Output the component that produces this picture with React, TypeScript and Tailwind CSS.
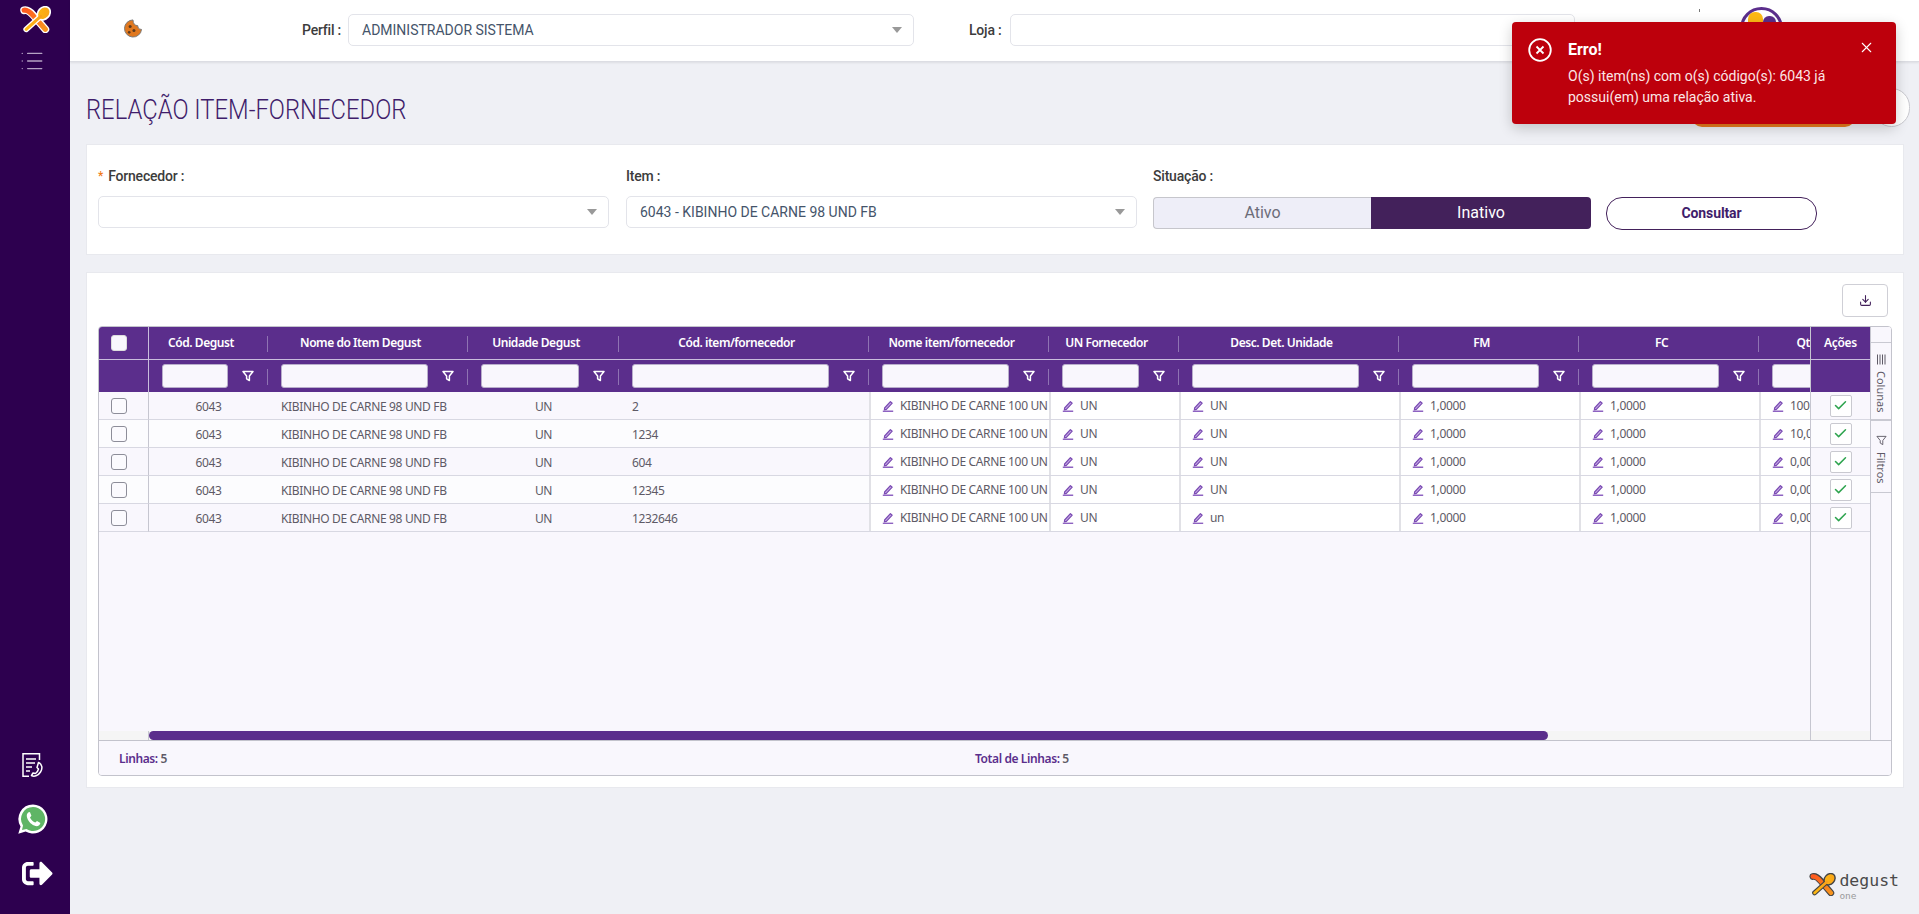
import React from "react";
import { Check, Download, List, X } from "lucide-react";
import { FaSignOutAlt } from "react-icons/fa";

const roboto = "font-['Roboto',sans-serif]";
const cellFont = "font-['Noto_Sans',sans-serif]";

type Col = { title: string; w: number; kind: "center" | "left" | "edit"; values: string[] };
const n = (v: string) => [v, v, v, v, v];
const columns: Col[] = [
  { title: "Cód. Degust", w: 119, kind: "center", values: n("6043") },
  { title: "Nome do Item Degust", w: 200, kind: "left", values: n("KIBINHO DE CARNE 98 UND FB") },
  { title: "Unidade Degust", w: 151, kind: "center", values: n("UN") },
  { title: "Cód. item/fornecedor", w: 250, kind: "left", values: ["2", "1234", "604", "12345", "1232646"] },
  { title: "Nome item/fornecedor", w: 180, kind: "edit", values: n("KIBINHO DE CARNE 100 UN") },
  { title: "UN Fornecedor", w: 130, kind: "edit", values: n("UN") },
  { title: "Desc. Det. Unidade", w: 220, kind: "edit", values: ["UN", "UN", "UN", "UN", "un"] },
  { title: "FM", w: 180, kind: "edit", values: n("1,0000") },
  { title: "FC", w: 180, kind: "edit", values: n("1,0000") },
  { title: "Qtd. Mín. Pedido", w: 180, kind: "edit", values: ["100,0000", "10,0000", "0,0000", "0,0000", "0,0000"] },
];
const rows = [0, 1, 2, 3, 4];
const rowBg = (i: number) => (i % 2 === 0 ? "bg-[#f9f7fd]" : "bg-[#fcfcfe]");

function Logo({ outline, className }: { outline: string; className: string }) {
  return (
    <svg viewBox="0 0 30 26" className={className}>
      <defs>
        <linearGradient id="lgA" x1="0" y1="0" x2="1" y2="1">
          <stop offset="0" stopColor="#ff5a1f" />
          <stop offset="1" stopColor="#f7941d" />
        </linearGradient>
        <linearGradient id="lgB" x1="1" y1="0" x2="0" y2="1">
          <stop offset="0" stopColor="#f9a11b" />
          <stop offset="1" stopColor="#fdb913" />
        </linearGradient>
      </defs>
      <path d="M4 4 Q8 3 13 9 L24.5 22.5" fill="none" stroke={outline} strokeWidth="7.5" strokeLinecap="round" />
      <path d="M4 4 Q8 3.5 13 9.5 L24.5 22.5" fill="none" stroke="url(#lgA)" strokeWidth="5" strokeLinecap="round" />
      <path d="M21 9 L6 22.5" fill="none" stroke={outline} strokeWidth="5.5" strokeLinecap="round" />
      <ellipse cx="23" cy="7" rx="5.6" ry="7" transform="rotate(42 23 7)" fill="url(#lgB)" stroke={outline} strokeWidth="1.6" />
      <path d="M20 10 L6 22.5" fill="none" stroke="url(#lgB)" strokeWidth="3" strokeLinecap="round" />
    </svg>
  );
}

function Caret() {
  return (
    <svg viewBox="0 0 10 6" className="w-[10px] h-[6px] shrink-0">
      <path d="M0 0 H10 L5 6 Z" fill="#999" />
    </svg>
  );
}

function SelectBox({ value, className }: { value?: string; className: string }) {
  return (
    <div className={`h-[32px] bg-white border border-[#e3e4ea] rounded-[5px] flex items-center justify-between pl-[13px] pr-[11px] ${className}`}>
      <span className={`${roboto} text-[14px] text-[#45546a]`}>{value}</span>
      <Caret />
    </div>
  );
}

function Funnel() {
  return (
    <svg viewBox="0 0 12 12" className="w-[12px] h-[12px] shrink-0">
      <path d="M1 1.5 H11 L7.4 6 V10.5 L4.6 8.8 V6 Z" fill="none" stroke="#fff" strokeWidth="1.5" strokeLinejoin="round" />
    </svg>
  );
}

function Pencil() {
  return (
    <svg viewBox="0 0 12 12" className="w-[12px] h-[12px] shrink-0">
      <path d="M2.6 8 L8.4 1.6 L10.2 3.2 L4.4 9.4 L2.4 9.8 Z" fill="#c3a9e2" stroke="#7b4bb3" strokeWidth="1.2" strokeLinejoin="round" />
      <path d="M0.8 11.3 H11.2" stroke="#8e63c1" strokeWidth="1.4" />
    </svg>
  );
}

function SmallCheckbox({ white }: { white?: boolean }) {
  return (
    <div className={`w-[16px] h-[16px] rounded-[3px] border ${white ? "bg-[#f9f7fd] border-[#ddd]" : "bg-[#fbfafe] border-[#8d8d99]"}`} />
  );
}

function HeaderCol({ col }: { col: Col }) {
  return (
    <div style={{ width: col.w }} className="shrink-0 relative">
      <div className="h-[33px] flex items-center justify-center pr-[15px] whitespace-nowrap border-b border-[#c9bddd]">
        <span className={`${cellFont} text-[12px] font-semibold text-white tracking-[-0.45px]`}>{col.title}</span>
      </div>
      <div className="h-[32px] flex items-center pl-[13px] pr-[14px] gap-[14px]">
        <div className="flex-1 h-[24px] bg-[#f9f7fd] border border-[#b9aecb] rounded-[3px]" />
        <Funnel />
      </div>
      <div className="absolute right-0 top-[9px] h-[16px] w-px bg-[#8f73b3]" />
      <div className="absolute right-0 top-[42px] h-[16px] w-px bg-[#8f73b3]" />
    </div>
  );
}

function BodyCell({ col, i }: { col: Col; i: number }) {
  const text = col.values[i];
  if (col.kind === "edit") {
    return (
      <div style={{ width: col.w }} className="shrink-0 h-full bg-white border-l-[2px] border-[#e1e1e6] flex items-center pl-[11px] gap-[6px] overflow-hidden whitespace-nowrap">
        <Pencil />
        <span className={`${cellFont} text-[12px] text-[#5e5a66] tracking-[-0.35px]`}>{text}</span>
      </div>
    );
  }
  return (
    <div
      style={{ width: col.w }}
      className={`shrink-0 h-full flex items-center pt-[2px] whitespace-nowrap overflow-hidden ${col.kind === "center" ? "justify-center" : "pl-[13px]"}`}
    >
      <span className={`${cellFont} text-[12px] text-[#5e5a66] tracking-[-0.35px]`}>{text}</span>
    </div>
  );
}

function Grid() {
  return (
    <div className="h-[450px] border border-[#c3c3cc] rounded-[4px] flex flex-col overflow-hidden">
      <div className="flex-1 flex min-h-0 bg-[#f9f7fd]">
        {/* pinned left */}
        <div className="w-[50px] shrink-0 flex flex-col">
          <div className="h-[65px] bg-[#5b2e8c] border-r border-[#c9bddd]">
            <div className="h-[33px] flex items-center pl-[12px] border-b border-[#c9bddd]">
              <SmallCheckbox white />
            </div>
          </div>
          {rows.map((i) => (
            <div key={i} className={`h-[28px] border-b border-r border-r-[#c6c6d0] border-b-[#d8d8e2] flex items-center pl-[12px] ${rowBg(i)}`}>
              <SmallCheckbox />
            </div>
          ))}
          <div className="flex-1" />
          <div className="h-[9px] bg-[#f5f5f5] border-r border-[#c6c6d0]" />
        </div>
        {/* center viewport */}
        <div className="flex-1 min-w-0 flex flex-col overflow-hidden">
          <div className="flex h-[65px] bg-[#5b2e8c] shrink-0">
            {columns.map((c) => (
              <HeaderCol key={c.title} col={c} />
            ))}
          </div>
          {rows.map((i) => (
            <div key={i} className={`flex h-[28px] shrink-0 border-b border-[#d8d8e2] ${rowBg(i)}`}>
              {columns.map((c) => (
                <BodyCell key={c.title} col={c} i={i} />
              ))}
            </div>
          ))}
          <div className="flex-1" />
          <div className="h-[9px] shrink-0 bg-[#f5f5f5]">
            <div className="w-[1399px] h-[9px] rounded-full bg-[#5b2e8c]" />
          </div>
        </div>
        {/* pinned right */}
        <div className="w-[60px] shrink-0 flex flex-col border-l border-[#c6c6d0]">
          <div className="h-[65px] bg-[#5b2e8c]">
            <div className="h-[33px] flex items-center justify-center border-b border-[#c9bddd]">
              <span className={`${cellFont} text-[12px] font-semibold text-white tracking-[-0.3px]`}>Ações</span>
            </div>
          </div>
          {rows.map((i) => (
            <div key={i} className={`h-[28px] border-b border-[#d8d8e2] flex items-center justify-center ${rowBg(i)}`}>
              <div className="w-[22px] h-[22px] bg-white border border-[#c9c9d0] rounded-[2px] flex items-center justify-center">
                <Check size={15} strokeWidth={2.4} className="text-[#2ea44f]" />
              </div>
            </div>
          ))}
          <div className="flex-1" />
          <div className="h-[9px] bg-[#f5f5f5]" />
        </div>
        {/* side bar */}
        <div className={`w-[21px] shrink-0 flex flex-col border-l border-[#c6c6d0] bg-[#f9f7fd] ${cellFont} text-[11px] text-[#5e5a66]`}>
          <div className="h-[16px] border-b border-[#c9c9d2]" />
          <div className="h-[78px] flex flex-col items-center pt-[11px] gap-[6px] border-b-[2px] border-[#c9c9d2]">
            <svg viewBox="0 0 11 11" className="w-[11px] h-[11px] shrink-0">
              <path d="M1.5 0.5 V10.5 M4 0.5 V10.5 M6.5 0.5 V10.5 M9 0.5 V10.5" stroke="#5e5a66" strokeWidth="1" />
            </svg>
            <span className="[writing-mode:vertical-rl] leading-none">Colunas</span>
          </div>
          <div className="h-[71px] mt-px flex flex-col items-center pt-[13px] gap-[6px] border-b border-[#c9c9d2]">
            <svg viewBox="0 0 12 12" className="w-[11px] h-[11px] shrink-0">
              <path d="M1 1.5 H11 L7.4 6 V10.5 L4.6 8.8 V6 Z" fill="none" stroke="#5e5a66" strokeWidth="1" />
            </svg>
            <span className="[writing-mode:vertical-rl] leading-none">Filtros</span>
          </div>
        </div>
      </div>
      <div className={`h-[35px] shrink-0 border-t border-[#c3c3cc] bg-[#f9f7fd] flex items-center pl-[20px] pt-[2px] ${cellFont} text-[12px] font-semibold tracking-[-0.4px]`}>
        <div className="w-[856px]">
          <span className="text-[#5b2e8c]">Linhas: </span>
          <span className="text-[#5e5a66]">5</span>
        </div>
        <div>
          <span className="text-[#5b2e8c]">Total de Linhas: </span>
          <span className="text-[#5e5a66]">5</span>
        </div>
      </div>
    </div>
  );
}

function DocPhoneIcon() {
  return (
    <svg viewBox="0 0 22 24" className="w-[22px] h-[24px]" fill="none" stroke="#fff" strokeWidth="1.5">
      <path d="M17.5 7 V0.8 H1 V23.2 H7" />
      <path d="M4 6 H14 M4 10 H13 M4 14 H10 M4 18 H8" />
      <path d="M16.5 9.5 C20 11 21 15 18.5 19 C16 23 12 24 9.5 22.5 L11 20 L13.5 20.5 C15 19.5 16 18 16.5 16 L15 14.5 Z" strokeLinejoin="round" />
    </svg>
  );
}

function WhatsappIcon() {
  return (
    <svg viewBox="0 0 30 30" className="w-[30px] h-[30px]">
      <path d="M15 0.5 A14.5 14.5 0 1 1 7.6 27.5 L0.3 29.7 L2.5 22.4 A14.5 14.5 0 0 1 15 0.5 Z" fill="#fff" />
      <path d="M15 3 A12 12 0 1 1 8.5 25 L4 26 L5 21.5 A12 12 0 0 1 15 3 Z" fill="#5fb565" />
      <path d="M11 8 C9 9 8.2 11 9.2 14 C10.5 18 14 21 17.5 22 C20 22.6 22 21 22.4 19 L19 17 L17.3 18.6 C15 17.8 12.8 15.6 12 13.5 L13.4 11.7 L12 8.2 Z" fill="#fff" />
    </svg>
  );
}

const labelCls = "text-[14px] font-medium text-[#3c3c3c] tracking-[-0.2px]";

export default function App() {
  return (
    <div className={`relative w-full h-[914px] overflow-hidden flex bg-[#eff0f5] ${roboto}`}>
      <aside className="w-[70px] shrink-0 bg-[#2d004f] flex flex-col items-center">
        <Logo outline="#fff" className="w-[31px] h-[27px] mt-[6px]" />
        <List size={26} strokeWidth={1.3} className="text-[#b5a2c4] mt-[15px] -ml-[6px]" />
        <div className="flex-1" />
        <div className="-ml-[5px]"><DocPhoneIcon /></div>
        <div className="mt-[27px] -ml-[4px]"><WhatsappIcon /></div>
        <FaSignOutAlt className="text-white w-[31px] h-[31px] mt-[24px] mb-[25px] ml-[5px]" />
      </aside>

      <main className="flex-1 min-w-0 flex flex-col">
        <header className="h-[62px] shrink-0 bg-white border-b border-[#dcdde3] shadow-[0_1px_2px_rgba(0,0,0,0.08)] flex items-center pl-[54px] pb-[1px]">
          <svg viewBox="0 0 18 20" className="w-[18px] h-[19px] -mt-[4px] shrink-0">
            <path d="M9 1 A9 9 0 1 0 18 11 C15 11 14 9 14 7 C11 7 9 5 9 1 Z" fill="#e0781f" stroke="#777" strokeWidth="1" />
            <circle cx="6" cy="8" r="1.6" fill="#5c3a1e" />
            <circle cx="10" cy="12" r="1.6" fill="#5c3a1e" />
            <circle cx="5" cy="14" r="1.4" fill="#5c3a1e" />
          </svg>
          <div className="w-[160px] shrink-0" />
          <span className={`w-[46px] shrink-0 ${labelCls}`}>Perfil :</span>
          <SelectBox value="ADMINISTRADOR SISTEMA" className="w-[566px] shrink-0" />
          <span className={`ml-[55px] w-[41px] shrink-0 ${labelCls}`}>Loja :</span>
          <div className="w-[565px] shrink-0 h-[32px] bg-white border border-[#e3e4ea] rounded-[5px]" />
          <div className="ml-[124px] w-px h-[3px] -mt-[40px] bg-[#777]" />
          <svg viewBox="0 0 43 43" className="ml-[40px] w-[43px] h-[43px] -mt-[3px] shrink-0">
            <circle cx="21.5" cy="21.5" r="20" fill="#fff" stroke="#5b2e8c" strokeWidth="3" />
            <rect x="8" y="5" width="15" height="30" rx="7" fill="#fdb913" />
            <rect x="23" y="9" width="13" height="26" rx="6" fill="#5b2e8c" />
          </svg>
        </header>

        <div className="h-[82px] shrink-0 pt-[9px] pl-[16px] pr-[9px] flex items-center justify-between">
          <h1 className="text-[28px] font-light text-[#3f1d6b] leading-none whitespace-nowrap origin-left scale-x-[0.85] mt-[5px]">RELAÇÃO ITEM-FORNECEDOR</h1>
          <div className="flex items-center gap-[18px]">
            <div className="w-[163px] h-[36px] mt-[3px] rounded-[10px] bg-[#e87b1e]" />
            <div className="w-[37px] h-[39px] rounded-full bg-white border border-[#c9c9cf]" />
          </div>
        </div>

        <section className="h-[111px] shrink-0 ml-[16px] mr-[15px] bg-white border border-[#e8e9ee] pl-[11px] pt-[21px] flex">
          <div className="w-[511px] shrink-0">
            <div className={`h-[20px] flex items-center ${labelCls}`}>
              <span className="text-[#f07a1a] mr-[5px] text-[12px]">*</span>Fornecedor :
            </div>
            <SelectBox className="mt-[10px] w-full" />
          </div>
          <div className="w-[511px] shrink-0 ml-[17px]">
            <div className={`h-[20px] flex items-center ${labelCls}`}>Item :</div>
            <SelectBox value="6043 - KIBINHO DE CARNE 98 UND FB" className="mt-[10px] w-full" />
          </div>
          <div className="w-[438px] shrink-0 ml-[16px]">
            <div className={`h-[20px] flex items-center ${labelCls}`}>Situação :</div>
            <div className="mt-[11px] h-[32px] flex">
              <div className="w-[218px] bg-[#eeeef8] border border-[#c6c6cc] border-r-0 rounded-l-[4px] flex items-center justify-center text-[16px] text-[#6c6c78]">Ativo</div>
              <div className="flex-1 bg-[#43215b] rounded-r-[4px] flex items-center justify-center text-[16px] text-white">Inativo</div>
            </div>
          </div>
          <div className="w-[211px] shrink-0 ml-[15px] mt-[31px] h-[33px] rounded-[16px] bg-white border border-[#43215b] flex items-center justify-center text-[14px] font-bold text-[#3f1d6b] tracking-[-0.1px]">Consultar</div>
        </section>

        <section className="h-[516px] shrink-0 mt-[17px] ml-[16px] mr-[15px] bg-white border border-[#e8e9ee] px-[11px] pt-[11px]">
          <div className="flex justify-end pr-[4px] mb-[9px]">
            <div className="w-[46px] h-[33px] rounded-[4px] border border-[#cfcfd6] flex items-center justify-center">
              <Download size={13} strokeWidth={2} className="text-[#43215b]" />
            </div>
          </div>
          <Grid />
        </section>

        <div className="flex-1 flex justify-end pr-[20px] pt-[85px]">
          <div className="flex items-start gap-[3px]">
            <Logo outline="#444" className="w-[27px] h-[23px]" />
            <div className="flex flex-col font-['DejaVu_Sans_Mono',monospace] leading-none -mt-[1px]">
              <span className="text-[16.5px] text-[#4a4a4a] leading-[17px]">degust</span>
              <span className="text-[9.5px] text-[#9a9a9a] leading-[8px] mt-[3px]">one</span>
            </div>
          </div>
        </div>
      </main>

      {/* toast over the page */}
      <div className="absolute left-[1512px] top-[22px] w-[384px] h-[102px] bg-[#bd000c] rounded-[4px] shadow-[0_4px_14px_rgba(0,0,0,0.2)] flex text-white">
        <svg viewBox="0 0 24 24" className="w-[24px] h-[24px] ml-[16px] mt-[16px] shrink-0" fill="none" stroke="#fff" strokeWidth="1.8">
          <circle cx="12" cy="12" r="10.8" />
          <path d="M8.5 8.5 L15.5 15.5 M15.5 8.5 L8.5 15.5" />
        </svg>
        <div className="ml-[16px] w-[290px] shrink-0 pt-[17px]">
          <div className="text-[16px] font-bold leading-[22px]">Erro!</div>
          <div className="text-[14px] leading-[21px] mt-[5px] text-[#fbe6e6]">O(s) item(ns) com o(s) código(s): 6043 já possui(em) uma relação ativa.</div>
        </div>
        <X size={17} strokeWidth={1.5} className="mt-[17px] shrink-0" />
      </div>
    </div>
  );
}
